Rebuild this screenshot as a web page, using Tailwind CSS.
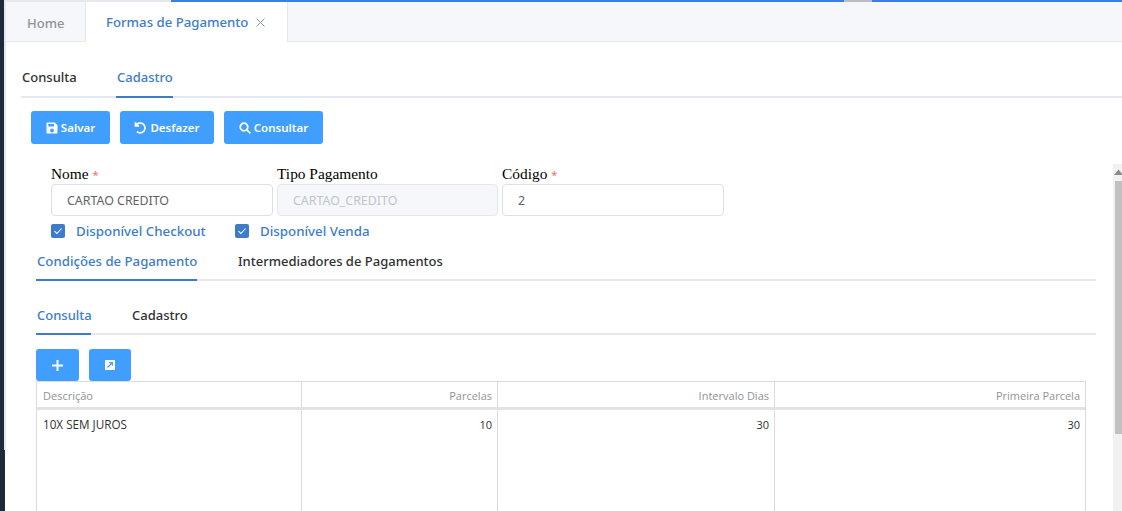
<!DOCTYPE html>
<html lang="en">
<head>
    <meta charset="UTF-8">
    <title>Formas de Pagamento</title>
    <script src="https://cdn.jsdelivr.net/npm/@tailwindcss/browser@4"></script>
</head>
<body class="bg-white h-[511px] w-[1122px] overflow-hidden font-['Noto_Sans',sans-serif]">
    <div class="flex h-[511px] overflow-hidden">
        <!-- Left edge -->
        <div class="w-[6px] shrink-0 flex flex-col">
            <div class="h-[450px] flex">
                <div class="w-[4px] bg-[#1e293b]"></div>
                <div class="w-[2px] bg-[#e4e7ed]"></div>
            </div>
            <div class="w-[5px] flex-1 bg-[#1e293b]"></div>
        </div>
        <div class="flex-1 min-w-0">
            <!-- Top loading bar -->
            <div class="h-[2px] flex bg-[#e4e7ed]">
                <div class="w-[165px]"></div>
                <div class="w-[673px] bg-[#3b7de9]"></div>
                <div class="w-[28px] bg-[#b9bcc2]"></div>
                <div class="flex-1 bg-[#3b7de9]"></div>
            </div>
            <!-- Page tabs -->
            <div class="h-[40px] flex bg-[#f5f7fa] border-b border-[#e4e7ed] text-[13px] font-medium">
                <div class="w-[80px] pl-[21px] leading-[42px] text-[#909399] border-r border-[#e4e7ed]">Home</div>
                <div class="w-[202px] h-[40px] pl-[20px] pt-[1px] flex items-center gap-[8px] bg-white border-r border-[#e4e7ed] text-[13.2px] text-[#3d7cc9]">
                    Formas de Pagamento
                    <svg class="w-[9px] h-[9px]" viewBox="0 0 9 9" fill="none" stroke="#8a97a8" stroke-width="1"><path d="M.5.5l8 8M8.5.5l-8 8"/></svg>
                </div>
            </div>
            <!-- Main tabs -->
            <div class="ml-[15px] mt-[15px] h-[41px] flex border-b-2 border-[#e4e7ed] text-[13px] font-medium">
                <div class="w-[95px] pt-[11px] text-[#303133] leading-[18px] pl-[1px]">Consulta</div>
                <div class="w-[57px] h-[41px] pt-[11px] leading-[18px] pl-[1px] text-[#3d7cc9] border-b-2 border-[#3d7cc9]">Cadastro</div>
            </div>
            <!-- Toolbar -->
            <div class="ml-[25px] mt-[13px] flex gap-[10px] text-[11.5px] font-semibold text-white">
                <button class="h-[33px] w-[79px] rounded-[3px] bg-[#409eff] flex items-center justify-center gap-[3px]">
                    <svg class="w-[12px] h-[12px]" viewBox="0 0 12 12"><path fill="#fff" fill-rule="evenodd" d="M1.5 0.5h7.2l2.8 2.8v7.2a1 1 0 0 1-1 1h-9a1 1 0 0 1-1-1v-9a1 1 0 0 1 1-1zM2.3 2v2.6h5.6V2zM6 6.6a1.9 1.9 0 1 0 0 3.8 1.9 1.9 0 0 0 0-3.8z"/></svg>
                    Salvar
                </button>
                <button class="h-[33px] w-[94px] rounded-[3px] bg-[#409eff] flex items-center justify-center gap-[3px]">
                    <svg class="w-[13px] h-[13px]" viewBox="0 0 13 13" fill="none" stroke="#fff" stroke-width="1.7"><path d="M1.5 1.2v3.6h3.6M1.8 4.6a4.9 4.9 0 1 1 1 5.9"/></svg>
                    Desfazer
                </button>
                <button class="h-[33px] w-[99px] rounded-[3px] bg-[#409eff] flex items-center justify-center gap-[3px]">
                    <svg class="w-[12px] h-[12px]" viewBox="0 0 12 12" fill="none" stroke="#fff" stroke-width="1.7"><circle cx="5" cy="5" r="3.8"/><path d="M7.8 7.8l3.6 3.6"/></svg>
                    Consultar
                </button>
            </div>
            <!-- Form area -->
            <div class="mt-[20px] flex">
                <div class="w-[1107px] pl-[30px] shrink-0">
                    <div class="pl-[15px] flex gap-[4px]">
                        <div class="w-[222px]">
                            <div class="h-[20px] font-['Liberation_Serif',serif] text-[15.4px] leading-[20px] text-black">Nome <span class="font-['Noto_Sans',sans-serif] text-[11px] text-[#f56c6c]">*</span></div>
                            <div class="h-[32px] border border-[#dcdfe6] rounded-[4px] pl-[15px] leading-[31px] text-[12.4px] text-[#606266]">CARTAO CREDITO</div>
                        </div>
                        <div class="w-[221px]">
                            <div class="h-[20px] font-['Liberation_Serif',serif] text-[15.4px] leading-[20px] text-black">Tipo Pagamento</div>
                            <div class="h-[32px] border border-[#e4e7ed] rounded-[4px] bg-[#f5f7fa] pl-[15px] leading-[31px] text-[12.4px] text-[#c0c4cc]">CARTAO_CREDITO</div>
                        </div>
                        <div class="w-[222px]">
                            <div class="h-[20px] font-['Liberation_Serif',serif] text-[15.4px] leading-[20px] text-black">Código <span class="font-['Noto_Sans',sans-serif] text-[11px] text-[#f56c6c]">*</span></div>
                            <div class="h-[32px] border border-[#dcdfe6] rounded-[4px] pl-[15px] leading-[31px] text-[12.4px] text-[#606266]">2</div>
                        </div>
                    </div>
                    <div class="pl-[15px] mt-[7px] flex h-[16px] items-center text-[13.3px] font-medium text-[#3d7cc9]">
                        <span class="w-[14px] h-[14px] rounded-[2px] bg-[#3d7cc9] flex items-center justify-center">
                            <svg class="w-[10px] h-[10px]" viewBox="0 0 10 10" fill="none" stroke="#fff" stroke-width="1.1"><path d="M1.5 5.2l2.4 2.3 4.6-5"/></svg>
                        </span>
                        <span class="ml-[11px] w-[159px] pt-[2px]">Disponível Checkout</span>
                        <span class="w-[14px] h-[14px] rounded-[2px] bg-[#3d7cc9] flex items-center justify-center">
                            <svg class="w-[10px] h-[10px]" viewBox="0 0 10 10" fill="none" stroke="#fff" stroke-width="1.1"><path d="M1.5 5.2l2.4 2.3 4.6-5"/></svg>
                        </span>
                        <span class="ml-[11px] pt-[2px]">Disponível Venda</span>
                    </div>
                    <!-- Inner tabs -->
                    <div class="mt-[9px] h-[33px] w-[1060px] flex border-b-2 border-[#e4e7ed] text-[13px] font-medium">
                        <div class="w-[161px] h-[33px] pl-[1px] pt-[4px] leading-[18px] whitespace-nowrap text-[13.2px] text-[#3d7cc9] border-b-2 border-[#3d7cc9]">Condições de Pagamento</div>
                        <div class="pl-[41px] pt-[4px] leading-[18px] text-[#303133]">Intermediadores de Pagamentos</div>
                    </div>
                    <div class="mt-[12px] h-[42px] w-[1060px] flex border-b-2 border-[#e4e7ed] text-[13px] font-medium">
                        <div class="w-[55px] h-[42px] pl-[1px] pt-[13px] leading-[18px] text-[#3d7cc9] border-b-2 border-[#3d7cc9]">Consulta</div>
                        <div class="pl-[41px] pt-[13px] leading-[18px] text-[#303133]">Cadastro</div>
                    </div>
                    <div class="mt-[14px] flex gap-[10px]">
                        <button class="h-[32px] w-[43px] rounded-[3px] bg-[#409eff] flex items-center justify-center">
                            <svg class="w-[11px] h-[11px]" viewBox="0 0 11 11"><path fill="#fff" d="M4.5 0h2v4.5H11v2H6.5V11h-2V6.5H0v-2h4.5z"/></svg>
                        </button>
                        <button class="h-[32px] w-[42px] rounded-[3px] bg-[#409eff] flex items-center justify-center">
                            <svg class="w-[10px] h-[10px]" viewBox="0 0 10 10"><path fill="#fff" fill-rule="evenodd" d="M0 0h10v10H0zM4.2 2v1.2h1.7L2 7.1l.9.9 3.9-3.9v1.7H8V2z"/></svg>
                        </button>
                    </div>
                    <!-- Table -->
                    <div class="w-[1050px] h-[200px] border border-[#dcdcdc] text-[11px] font-['Open_Sans',sans-serif]">
                        <div class="h-[28px] flex border-b-[3px] border-[#e2e2e2] text-[#909399] leading-[27px]">
                            <div class="w-[265px] px-[6px] border-r border-[#dcdcdc]">Descrição</div>
                            <div class="w-[196px] px-[5px] border-r border-[#dcdcdc] text-right">Parcelas</div>
                            <div class="w-[277px] px-[5px] border-r border-[#dcdcdc] text-right">Intervalo Dias</div>
                            <div class="flex-1 px-[5px] text-right">Primeira Parcela</div>
                        </div>
                        <div class="h-[172px] flex text-[#303133] leading-[29px]">
                            <div class="w-[265px] px-[6px] border-r border-[#dcdcdc] text-[11.7px]">10X SEM JUROS</div>
                            <div class="w-[196px] px-[5px] border-r border-[#dcdcdc] text-right">10</div>
                            <div class="w-[277px] px-[5px] border-r border-[#dcdcdc] text-right">30</div>
                            <div class="flex-1 px-[5px] text-right">30</div>
                        </div>
                    </div>
                </div>
                <!-- Scrollbar -->
                <div class="w-[11px] h-[347px] bg-[#f1f1f1] flex flex-col items-center">
                    <svg class="w-[9px] h-[17px] shrink-0" viewBox="0 0 9 17"><path fill="#8a8a8a" d="M4.5 5.5L9 11H0z"/></svg>
                    <div class="w-[9px] ml-[2px] h-[253px] bg-[#c1c1c1]"></div>
                </div>
            </div>
        </div>
    </div>
</body>
</html>
